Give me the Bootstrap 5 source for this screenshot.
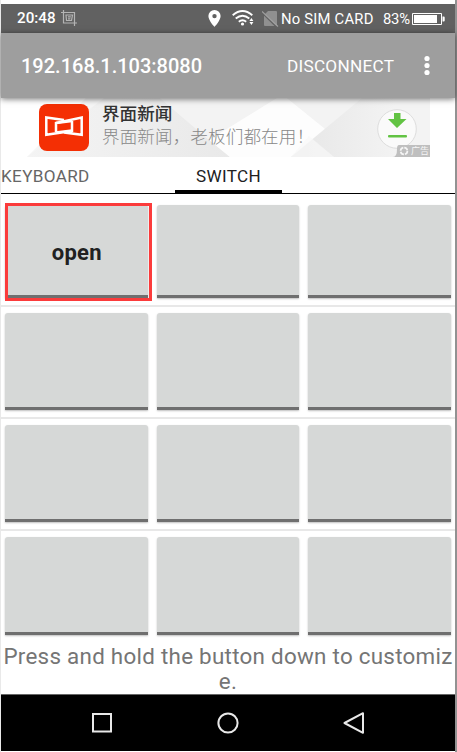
<!DOCTYPE html>
<html lang="en">
<head>
<meta charset="utf-8">
<meta name="viewport" content="width=device-width, initial-scale=1">
<title>Switch panel</title>
<link href="https://cdn.jsdelivr.net/npm/bootstrap@5.3.0/dist/css/bootstrap.min.css" rel="stylesheet">
<style>
body{background:#fff;font-family:Roboto,"Noto Sans CJK SC",sans-serif;overflow:hidden}
svg{display:block;flex:none}
.phone{width:457px;height:752px;padding:4px 0 1px 1px;border-right:2px solid #929292;background:linear-gradient(90deg,#e9e9e9 1px,#fff 1px);line-height:1;white-space:nowrap}
.status-bar{height:29px;background:#616161;color:#fff;font-size:14.8px;padding:1px 0 0 16px}
.clock{font-size:15.2px;font-weight:500;width:44px}
.crop-icon{margin-right:130px}
.pin-icon{margin-right:11px}
.wifi-icon{margin-right:8px}
.sim-icon{margin-right:2px}
.sim-text{width:102px;letter-spacing:.22px}
.percent{width:29px;letter-spacing:-.2px}
.app-bar{height:65px;background:#9e9e9e;color:#fff;padding:2px 0 0 20px;box-shadow:0 1px 6px rgba(0,0,0,.55);z-index:1}
.host{font-size:20px;font-weight:500;width:266px}
.disc{font-size:17.2px;width:136px;letter-spacing:.25px;padding-top:1px}
.ad{height:59px;width:454px}
.ad-art{left:25px;top:0}
.ad-copy{left:101px;top:6px}
.ad-title,.ad-sub{font-family:"Noto Sans CJK SC",sans-serif;font-size:17.6px;line-height:18px}
.ad-title{font-weight:500;color:#333}
.ad-sub{font-weight:300;color:#888;margin-top:5px;letter-spacing:.08px}
.ad-tag{font:400 9px/10px "Noto Sans CJK SC",sans-serif;color:#f5f5f5;left:410px;top:48px}
.tabs{height:37px;border-bottom:1px solid #000;font-size:17.1px;letter-spacing:.35px;color:#666}
.tab-off{width:89px;padding-top:4px}
.tab-on{width:107px;margin-left:85px;color:#212121;border-bottom:3px solid #000;padding-top:7px}
.grid-row{height:112px;padding:0 4.5px 0 4px;border-bottom:2px solid #e8e8e8;gap:9px}
.key{flex:1 1 0;background:#d6d8d7;border:0;border-radius:3px 3px 0 0;border-bottom:3px solid #6f6f6f;box-shadow:0 1px 2px rgba(0,0,0,.25);margin:6px 0 7px;padding:0;font-size:22px;font-weight:700;letter-spacing:.25px;color:#212121}
.first-row{height:113.5px}
.first-row .key{margin-top:11.5px}
.last-row{border:0;height:106.5px}
.last-row .key{margin-bottom:2px}
.marked span{display:inline-block;padding:6px 0 0 1px}
.marked::after{content:"";position:absolute;left:0;top:-2.5px;width:147px;height:98px;border:3px solid #fb3b3b}
.hint{height:57px;font-size:22.4px;letter-spacing:.27px;line-height:25px;color:#757575;text-align:center;padding-top:7px}
.nav-keys{height:57px;background:#000;border-top:1px solid #666;padding-left:90px;gap:104px}
</style>
</head>
<body>
<main class="phone d-flex flex-column">
<header class="status-bar d-flex align-items-center">
<span class="clock">20:48</span>
<svg class="crop-icon" width="17" height="17" viewBox="0 0 17 17" fill="none" stroke="#b4b4b4" stroke-width="1.2"><path d="M0 2.5H13.5V16M2.5 0V13H16M5 5h6.5l-1 5.5h-5zM7 6.8h2.8M7 8.8h2.4"/></svg>
<svg class="pin-icon" width="13" height="17" viewBox="0 0 13 17"><path fill="#fff" fill-rule="evenodd" d="M6.5 0A6.1 6.1 0 0 0 .4 6.1C.4 10.6 6.5 17 6.5 17s6.1-6.4 6.1-10.9A6.1 6.1 0 0 0 6.5 0zm0 3.9a2.2 2.2 0 1 1 0 4.4 2.2 2.2 0 0 1 0-4.4z"/></svg>
<svg class="wifi-icon" width="22" height="17" viewBox="0 0 22 17" fill="none" stroke="#fff" stroke-width="1.9"><path d="M.7 5.2Q10.5-3 20.3 5.2M3.7 8.6Q10.5 3 17.3 8.6M6.8 11.8Q10.5 8.8 14.2 11.8"/><circle cx="10.5" cy="14" r="1.6" fill="#fff" stroke="none"/><path fill="#fff" stroke="none" d="M19.4 8l2 3h-4zM19.4 15l2-3h-4z"/></svg>
<svg class="sim-icon" width="17" height="17" viewBox="0 0 17 17"><path fill="#909090" d="M6 1h8q1 0 1 1v14H3q-1 0-1-1V5z"/><path d="M0 2.8l14 13.7" stroke="#616161" stroke-width="1.5"/><path d="M0 1.5l16 15" stroke="#a0a0a0" stroke-width="1.1"/></svg>
<span class="sim-text">No SIM CARD</span><span class="percent">83%</span>
<svg width="34" height="12" viewBox="0 0 34 12"><path fill="none" stroke="#fff" d="M.5.5h29v11h-29z"/><path fill="#fff" d="M2 2h23v8H2zM30.5 3.5h1.2q1 0 1 1v3q0 1-1 1h-1.2z"/></svg>
</header>
<div class="app-bar d-flex align-items-center position-relative"><span class="host">192.168.1.103:8080</span><span class="disc">DISCONNECT</span>
<svg width="8" height="22" fill="#fff"><circle cx="4" cy="3.5" r="2.6"/><circle cx="4" cy="10.5" r="2.6"/><circle cx="4" cy="17.5" r="2.6"/></svg></div>
<section class="ad position-relative">
<svg class="ad-art position-absolute" width="404" height="59" viewBox="0 0 404 59">
<defs><linearGradient id="facet"><stop stop-color="#e6e6e6"/><stop offset=".75" stop-color="#f3f3f3"/></linearGradient><linearGradient id="facet2"><stop stop-color="#f4f4f4"/><stop offset="1" stop-color="#e9e9e9"/></linearGradient></defs>
<path fill="#f6f6f6" d="M60 0H404V59H1z"/><path fill="url(#facet2)" d="M1 59L78 0H134L204 59z"/>
<path fill="#f3f3f3" d="M134 0H251L183 42z"/>
<path fill="#fdfdfd" d="M251 0H261L308 38 291 59H204L183 42z"/>
<path fill="#f3f3f3" d="M261 0H336L308 38z"/>
<path fill="url(#facet)" d="M336 0H404V59H265z"/>
<path fill="#f8f8f8" opacity=".7" d="M283 38L308 59H265z"/>
<rect x="13" y="6" width="50" height="47" rx="8" fill="#f42f04"/>
<g fill="none" stroke="#fff" stroke-width="2.5"><path d="M38 22L20.3 19.5v17.2L46 33V23M30 34V25l25.7-5.5v17.3L38 34.6"/><path d="M30 25L46 23M30 34.5L46 32.5"/></g>
<circle cx="371" cy="31" r="19.3" fill="#fafafa" stroke="#ddd"/>
<path fill="#62c343" d="M368 15h6.5v6h6L371 30l-9-9h6z"/><rect x="362" y="37" width="19" height="2.5" rx="1" fill="#62c343"/>
<path fill="#bfbfbf" d="M373 47H404V59H367q4 0 4-8 0-4 2-4z"/><circle cx="378" cy="53" r="3.4" fill="none" stroke="#f5f5f5" stroke-width="1.7" stroke-dasharray="4.3 1"/>
</svg>
<div class="ad-copy position-absolute"><div class="ad-title">界面新闻</div><div class="ad-sub">界面新闻，老板们都在用！</div></div><span class="ad-tag position-absolute">广告</span></section>
<nav class="tabs d-flex"><span class="tab-off d-flex align-items-center">KEYBOARD</span><span class="tab-on d-flex align-items-center justify-content-center">SWITCH</span></nav>
<div class="grid-row first-row d-flex"><button class="key marked position-relative"><span>open</span></button><button class="key"></button><button class="key"></button></div>
<div class="grid-row d-flex"><button class="key"></button><button class="key"></button><button class="key"></button></div>
<div class="grid-row d-flex"><button class="key"></button><button class="key"></button><button class="key"></button></div>
<div class="grid-row last-row d-flex"><button class="key"></button><button class="key"></button><button class="key"></button></div>
<p class="hint m-0">Press and hold the button down to customiz<br>e.</p>
<footer class="nav-keys d-flex align-items-center">
<svg width="22" height="22" fill="none" stroke="#e8e8e8" stroke-width="2"><rect x="2" y="2" width="18" height="17.5"/></svg>
<svg width="22" height="22" fill="none" stroke="#e8e8e8" stroke-width="2"><circle cx="11" cy="11" r="9.6"/></svg>
<svg width="22" height="22" fill="none" stroke="#e8e8e8" stroke-width="2" stroke-linejoin="round"><path d="M20 1.2v19.6L1.5 11z"/></svg>
</footer>
</main>
<script src="https://cdn.jsdelivr.net/npm/bootstrap@5.3.0/dist/js/bootstrap.bundle.min.js"></script>
</body>
</html>
